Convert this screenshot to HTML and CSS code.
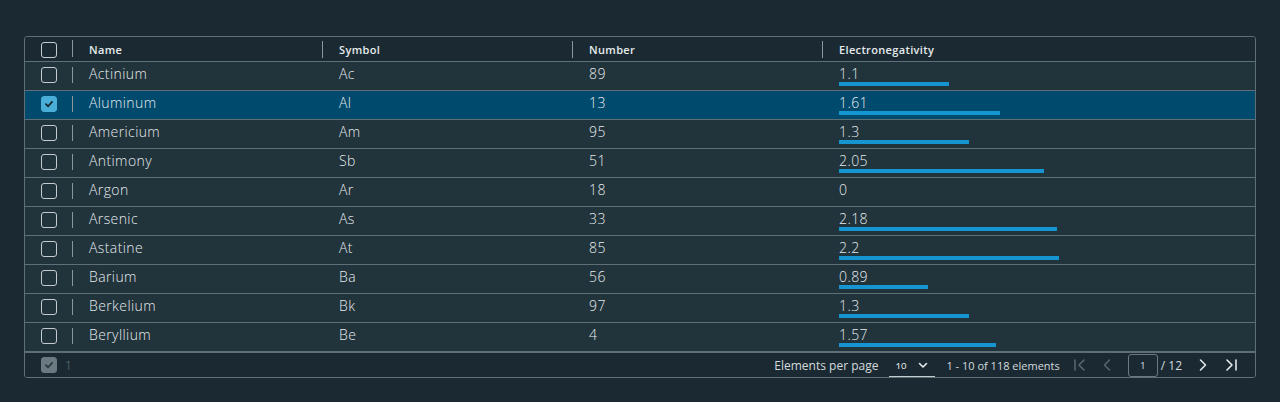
FILE: index.html
```html
<!DOCTYPE html>
<html lang="en">
<head>
<meta charset="utf-8">
<title>Elements datagrid</title>
<link rel="stylesheet" href="styles.css">
</head>
<body>
<div class="datagrid">
  <div class="row head">
    <div class="cell sel"><span class="cb"></span><span class="sep"></span></div>
    <div class="cell th"><span>Name</span><span class="sep"></span></div>
    <div class="cell th"><span>Symbol</span><span class="sep"></span></div>
    <div class="cell th"><span>Number</span><span class="sep"></span></div>
    <div class="cell th"><span>Electronegativity</span></div>
  </div>

  <div class="row">
    <div class="cell sel"><span class="cb"></span><span class="sep"></span></div>
    <div class="cell td">Actinium</div><div class="cell td">Ac</div><div class="cell td">89</div>
    <div class="cell td en"><span>1.1</span><span class="bar" style="width:110px"></span></div>
  </div>
  <div class="row selected">
    <div class="cell sel"><span class="cb on"><svg viewBox="0 0 16 16"><polyline points="4.5,8.2 7,10.6 11.5,5.6"/></svg></span><span class="sep"></span></div>
    <div class="cell td">Aluminum</div><div class="cell td">Al</div><div class="cell td">13</div>
    <div class="cell td en"><span>1.61</span><span class="bar" style="width:161px"></span></div>
  </div>
  <div class="row">
    <div class="cell sel"><span class="cb"></span><span class="sep"></span></div>
    <div class="cell td">Americium</div><div class="cell td">Am</div><div class="cell td">95</div>
    <div class="cell td en"><span>1.3</span><span class="bar" style="width:130px"></span></div>
  </div>
  <div class="row">
    <div class="cell sel"><span class="cb"></span><span class="sep"></span></div>
    <div class="cell td">Antimony</div><div class="cell td">Sb</div><div class="cell td">51</div>
    <div class="cell td en"><span>2.05</span><span class="bar" style="width:205px"></span></div>
  </div>
  <div class="row">
    <div class="cell sel"><span class="cb"></span><span class="sep"></span></div>
    <div class="cell td">Argon</div><div class="cell td">Ar</div><div class="cell td">18</div>
    <div class="cell td en"><span>0</span><span class="bar" style="width:0px"></span></div>
  </div>
  <div class="row">
    <div class="cell sel"><span class="cb"></span><span class="sep"></span></div>
    <div class="cell td">Arsenic</div><div class="cell td">As</div><div class="cell td">33</div>
    <div class="cell td en"><span>2.18</span><span class="bar" style="width:218px"></span></div>
  </div>
  <div class="row">
    <div class="cell sel"><span class="cb"></span><span class="sep"></span></div>
    <div class="cell td">Astatine</div><div class="cell td">At</div><div class="cell td">85</div>
    <div class="cell td en"><span>2.2</span><span class="bar" style="width:220px"></span></div>
  </div>
  <div class="row">
    <div class="cell sel"><span class="cb"></span><span class="sep"></span></div>
    <div class="cell td">Barium</div><div class="cell td">Ba</div><div class="cell td">56</div>
    <div class="cell td en"><span>0.89</span><span class="bar" style="width:89px"></span></div>
  </div>
  <div class="row">
    <div class="cell sel"><span class="cb"></span><span class="sep"></span></div>
    <div class="cell td">Berkelium</div><div class="cell td">Bk</div><div class="cell td">97</div>
    <div class="cell td en"><span>1.3</span><span class="bar" style="width:130px"></span></div>
  </div>
  <div class="row last">
    <div class="cell sel"><span class="cb"></span><span class="sep"></span></div>
    <div class="cell td">Beryllium</div><div class="cell td">Be</div><div class="cell td">4</div>
    <div class="cell td en"><span>1.57</span><span class="bar" style="width:157px"></span></div>
  </div>

  <div class="footer">
    <div class="foot-left">
      <span class="cb dis"><svg viewBox="0 0 16 16"><polyline points="4.5,8.2 7,10.6 11.5,5.6"/></svg></span>
      <span class="count">1</span>
    </div>
    <div class="foot-right">
      <span class="label">Elements per page</span>
      <span class="select"><span class="val">10</span><svg class="chev" viewBox="0 0 12 12"><polyline points="2.5,4.5 6,8 9.5,4.5"/></svg></span>
      <span class="range">1 - 10 of 118 elements</span>
      <span class="pg first dim"><svg viewBox="0 0 14 14"><line x1="2" y1="2" x2="2" y2="12"/><polyline points="11,2 6,7 11,12"/></svg></span>
      <span class="pg prev dim"><svg viewBox="0 0 10 14"><polyline points="7.5,2 2.5,7 7.5,12"/></svg></span>
      <span class="page-box">1</span>
      <span class="total">/ 12</span>
      <span class="pg next"><svg viewBox="0 0 10 14"><polyline points="2.5,2 7.5,7 2.5,12"/></svg></span>
      <span class="pg last-pg"><svg viewBox="0 0 14 14"><polyline points="3,2 8,7 3,12"/><line x1="12" y1="2" x2="12" y2="12"/></svg></span>
    </div>
  </div>
</div>
</body>
</html>
```

FILE: styles.css
```css
* { box-sizing: border-box; }

body {
  margin: 0;
  padding: 36px 24px 0;
  background: #1b2a32;
  font-family: "Open Sans", "Noto Sans", sans-serif;
  color: #e3e8eb;
}

.datagrid {
  width: 1232px;
  border: 1px solid #5f6f77;
  border-radius: 3px;
  overflow: hidden;
  background: #1b2a32;
}

.row {
  display: grid;
  grid-template-columns: 48px 250px 250px 250px 1fr;
  height: 29px;
  border-bottom: 1px solid #5f6f77;
  background: #21333b;
}

.row.head {
  height: 25px;
  background: #1b2a32;
}

.row.last { border-bottom: none; height: 28px; }

.row.selected { background: #004a6d; }

.cell {
  display: flex;
  min-width: 0;
}

.cell.sel {
  padding-left: 16px;
  align-items: flex-start;
  padding-top: 5px;
}

.head .cell.sel { padding-top: 4px; }
.head .cell.sel .sep { margin-top: -1px; }

.sep {
  width: 1px;
  height: 16px;
  background: #8a979d;
  margin-left: auto;
}

.head .sep { height: 17px; }

.cell.th {
  padding-left: 16px;
  align-items: center;
  font-size: 11px;
  font-weight: 600;
  letter-spacing: 0.35px;
  color: #e6eaec;
}

.cell.td {
  padding: 3px 0 0 16px;
  font-size: 14px;
  line-height: 18px;
  color: #e6ebee;
  font-weight: 300;
  letter-spacing: 0.4px;
}

.cell.en {
  flex-direction: column;
  align-items: flex-start;
}

.bar {
  display: block;
  height: 4px;
  margin-top: -1px;
  background: #1596d3;
}

.cb {
  width: 16px;
  height: 16px;
  border: 1px solid #c4ccd0;
  border-radius: 3px;
  display: flex;
  align-items: center;
  justify-content: center;
}

.head .cb { margin-top: 1px; }

.cb svg { width: 16px; height: 16px; }
.cb polyline {
  fill: none;
  stroke: #17252c;
  stroke-width: 2;
  stroke-linecap: round;
  stroke-linejoin: round;
}

.cb.on {
  background: #49afd9;
  border-color: #49afd9;
}

.cb.dis {
  background: #6b7a81;
  border-color: #6b7a81;
}

.cb.dis polyline { stroke: #26373f; }

.footer {
  display: flex;
  align-items: center;
  height: 26px;
  border-top: 2px solid #5f6f77;
  padding-left: 16px;
  background: #1b2a32;
}

.foot-left {
  display: flex;
  align-items: center;
  gap: 8px;
}

.count {
  font-size: 12px;
  font-weight: 300;
  color: #6b7a81;
}

.foot-right {
  margin-left: auto;
  display: flex;
  align-items: center;
  height: 100%;
  font-size: 11px;
  color: #d3dadd;
  padding-right: 17px;
}

.label { margin-right: 11px; font-size: 12px; }

.select {
  display: flex;
  align-items: center;
  height: 100%;
  width: 46px;
  padding-left: 6px;
  border-bottom: 1px solid #c4ccd0;
  margin-right: 11px;
}

.select .val {
  font-size: 10px;
  font-feature-settings: "onum";
  color: #e3e8eb;
}

.chev {
  width: 12px;
  height: 12px;
  margin-left: 11px;
}

.chev polyline, .pg polyline, .pg line {
  fill: none;
  stroke: #e3e8eb;
  stroke-width: 1.6;
  stroke-linecap: round;
  stroke-linejoin: round;
}

.range { margin-right: 13px; }

.pg {
  display: flex;
  align-items: center;
}

.pg svg { height: 14px; }
.first svg, .last-pg svg { width: 14px; }
.prev svg, .next svg { width: 10px; }

.pg.dim polyline, .pg.dim line { stroke: #56666d; }

.first { margin-right: 15px; }
.prev { margin-right: 16px; }

.page-box {
  width: 30px;
  height: 23px;
  border: 1px solid #6b7a81;
  border-radius: 3px;
  display: flex;
  align-items: center;
  justify-content: center;
  font-size: 9px;
  color: #e3e8eb;
}

.total {
  margin-left: 3px;
  margin-right: 16px;
  font-size: 12px;
}

.next { margin-right: 16px; }
```
